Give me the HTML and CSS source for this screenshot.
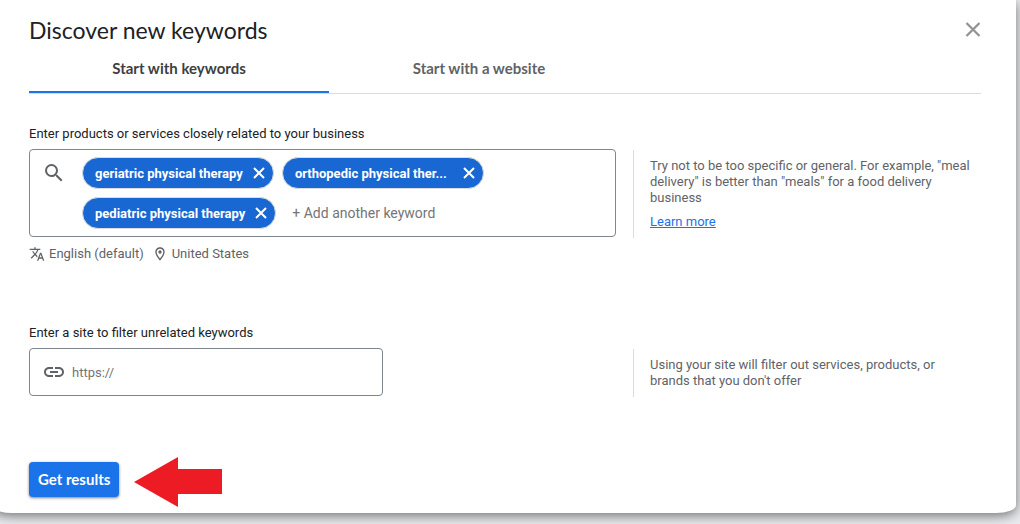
FILE: index.html
```html
<!DOCTYPE html>
<html lang="en">
  <head>
    <meta charset="utf-8" />
    <meta name="viewport" content="width=device-width, initial-scale=1" />
    <title>Discover new keywords</title>
    <link rel="stylesheet" href="styles.css">
  </head>
  <body>
    <main class="card">
      <header class="card-header">
        <h1>Discover new keywords</h1>
        <button type="button" class="close" aria-label="Close">
          <svg width="16" height="16" viewBox="0 0 16 16"><path d="M1.5 1l13 13M14.5 1l-13 13" /></svg>
        </button>
      </header>

      <div class="tabs" role="tablist">
        <button type="button" class="tab active" role="tab" aria-selected="true">Start with keywords</button>
        <button type="button" class="tab" role="tab" aria-selected="false">Start with a website</button>
      </div>

      <form>
        <!-- Keywords -->
        <div class="row keywords-row">
          <div class="field">
            <label for="keyword">Enter products or services closely related to your business</label>
            <div class="box keyword-box">
              <svg class="search-icon" width="24" height="24" viewBox="0 0 24 24"><path d="M15.5 14h-.79l-.28-.27A6.471 6.471 0 0 0 16 9.5 6.5 6.5 0 1 0 9.5 16c1.61 0 3.09-.59 4.23-1.57l.27.28v.79l5 4.99L20.49 19l-4.99-5zm-6 0C7.01 14 5 11.99 5 9.5S7.01 5 9.5 5 14 7.01 14 9.5 11.99 14 9.5 14z" /></svg>
              <div class="chips">
                <span class="chip">
                  <span class="chip-text">geriatric physical therapy</span>
                  <button type="button" aria-label="Remove"><svg width="12" height="12" viewBox="0 0 12 12"><path d="M1 1l10 10M11 1L1 11" /></svg></button>
                </span>
                <span class="chip chip-long">
                  <span class="chip-text">orthopedic physical ther...</span>
                  <button type="button" aria-label="Remove"><svg width="12" height="12" viewBox="0 0 12 12"><path d="M1 1l10 10M11 1L1 11" /></svg></button>
                </span>
                <span class="chip">
                  <span class="chip-text">pediatric physical therapy</span>
                  <button type="button" aria-label="Remove"><svg width="12" height="12" viewBox="0 0 12 12"><path d="M1 1l10 10M11 1L1 11" /></svg></button>
                </span>
                <input type="text" id="keyword" class="add-keyword" placeholder="+ Add another keyword" />
              </div>
            </div>
            <div class="targeting">
              <svg width="16" height="16" viewBox="0 0 24 24"><path d="M12.87 15.07l-2.54-2.51.03-.03A17.52 17.52 0 0 0 14.07 6H17V4h-7V2H8v2H1v2h11.17C11.5 7.92 10.44 9.75 9 11.35 8.07 10.32 7.3 9.19 6.69 8h-2c.73 1.63 1.73 3.17 2.98 4.56l-5.09 5.02L4 19l5-5 3.11 3.11.76-2.04zM18.5 10h-2L12 22h2l1.12-3h4.75L21 22h2l-4.5-12zm-2.62 7l1.62-4.33L19.12 17h-3.24z" /></svg>
              <span>English (default)</span>
              <svg class="pin" width="16" height="16" viewBox="0 0 24 24"><path d="M12 2C8.13 2 5 5.13 5 9c0 5.25 7 13 7 13s7-7.75 7-13c0-3.87-3.13-7-7-7zM7 9c0-2.76 2.24-5 5-5s5 2.24 5 5c0 2.88-2.88 7.19-5 9.88C9.92 16.21 7 11.85 7 9z" /><circle cx="12" cy="9" r="2.5" /></svg>
              <span>United States</span>
            </div>
          </div>
          <aside class="hint">
            <p>Try not to be too specific or general. For example, "meal delivery" is better than "meals" for a food delivery business</p>
            <a href="#">Learn more</a>
          </aside>
        </div>

        <!-- Site filter -->
        <div class="row site-row">
          <div class="field">
            <label for="site">Enter a site to filter unrelated keywords</label>
            <div class="box site-box">
              <svg width="24" height="24" viewBox="0 0 24 24"><path d="M3.9 12c0-1.71 1.39-3.1 3.1-3.1h4V7H7c-2.76 0-5 2.24-5 5s2.24 5 5 5h4v-1.9H7c-1.71 0-3.1-1.39-3.1-3.1zM8 13h8v-2H8v2zm9-6h-4v1.9h4c1.71 0 3.1 1.39 3.1 3.1s-1.39 3.1-3.1 3.1h-4V17h4c2.76 0 5-2.24 5-5s-2.24-5-5-5z" /></svg>
              <input type="text" id="site" placeholder="https://" />
            </div>
          </div>
          <aside class="hint">
            <p>Using your site will filter out services, products, or brands that you don't offer</p>
          </aside>
        </div>

        <div class="actions">
          <button type="submit" class="submit">Get results</button>
          <svg class="arrow" width="88" height="50" viewBox="0 0 88 50"><path d="M0 25L44 0v12h44v25H44v13z" /></svg>
        </div>
      </form>
    </main>
  </body>
</html>
```
FILE: styles.css
```css
* {
  box-sizing: border-box;
}

body {
  margin: 0;
  background-color: #e8eaed;
  font-family: Roboto, sans-serif;
  font-size: 13px;
  color: #3c4043;
  overflow-x: hidden;
}

button,
input {
  font-family: inherit;
  border: none;
  background: none;
  padding: 0;
}

button {
  cursor: pointer;
}

svg {
  display: block;
  flex: none;
  fill: #5f6368;
}

.card {
  margin: 0 4px 11px -8px;
  padding: 16px 35px 6px 37px;
  background-color: #fff;
  border-radius: 0 0 20px 20px / 0 0 8px 8px;
  box-shadow: 0 3px 12px rgba(0, 0, 0, 0.5);
}

.card-header {
  display: flex;
  justify-content: space-between;
  align-items: center;
}

h1 {
  margin: 0;
  font-family: Lato, sans-serif;
  font-size: 23px;
  font-weight: 400;
  line-height: 28px;
  color: #202124;
}

.close svg {
  fill: none;
  stroke: #919497;
  stroke-width: 2.3;
}

/* Tabs */
.tabs {
  display: flex;
  margin-top: 1px;
  border-bottom: 1px solid #dadce0;
}

.tab {
  width: 300px;
  height: 48px;
  border-bottom: 2px solid transparent;
  font-family: Lato, sans-serif;
  font-size: 15px;
  font-weight: 700;
  color: #5f6368;
}

.tab.active {
  color: #3c4043;
  border-bottom-color: #1a73e8;
}

/* Form rows */
.row {
  display: flex;
  align-items: flex-start;
  gap: 17px;
}

.keywords-row {
  margin-top: 32px;
}

.site-row {
  margin-top: 61px;
}

.field {
  flex: 1;
}

.field label {
  display: block;
  margin-bottom: 7px;
  line-height: 16px;
  color: #202124;
}

.box {
  display: flex;
  border: 1px solid #80868b;
  border-radius: 4px;
}

.keyword-box {
  padding: 7px 12px;
}

.search-icon {
  margin-top: 4px;
}

.chips {
  flex: 1;
  display: flex;
  flex-wrap: wrap;
  gap: 8px;
  margin-left: 16px;
}

.chip {
  display: flex;
  align-items: center;
  gap: 10px;
  height: 32px;
  padding: 0 8px 0 12px;
  border: 1px solid #dadce0;
  border-radius: 16px;
  background-color: #1967d2;
  color: #fff;
  font-weight: 700;
}

.chip-long {
  width: 202px;
}

.chip-text {
  flex: 1;
  white-space: nowrap;
}

.chip svg {
  fill: none;
  stroke: #fff;
  stroke-width: 2;
}

.add-keyword {
  flex: 1;
  min-width: 150px;
  height: 32px;
  padding-left: 8px;
  font-size: 14px;
}

input::placeholder {
  color: #757575;
  opacity: 1;
}

.targeting {
  display: flex;
  align-items: center;
  gap: 4px;
  margin-top: 7px;
  line-height: 20px;
  color: #5f6368;
}

.pin {
  margin-left: 4px;
}

.hint {
  flex: 0 0 348px;
  margin-top: 24px;
  padding: 8px 8px 8px 16px;
  border-left: 1px solid #dadce0;
  line-height: 16px;
  color: #5f6368;
}

.hint p {
  margin: 0;
}

.hint a {
  display: inline-block;
  margin-top: 8px;
  color: #1a73e8;
}

.site-box {
  width: 354px;
  height: 48px;
  align-items: center;
  gap: 6px;
  padding: 0 12px;
}

.site-box input {
  flex: 1;
  font-size: 13px;
}

/* Submit */
.actions {
  display: flex;
  align-items: flex-start;
  gap: 15px;
  margin-top: 60px;
}

.submit {
  margin-top: 5px;
  padding: 0 9px 2px;
  height: 35px;
  border-radius: 4px;
  background-color: #1a73e8;
  box-shadow: 0 1px 3px rgba(0, 0, 0, 0.5);
  font-family: Lato, sans-serif;
  font-size: 15px;
  font-weight: 700;
  color: #fff;
}

.arrow {
  fill: #ed1c24;
}
```
